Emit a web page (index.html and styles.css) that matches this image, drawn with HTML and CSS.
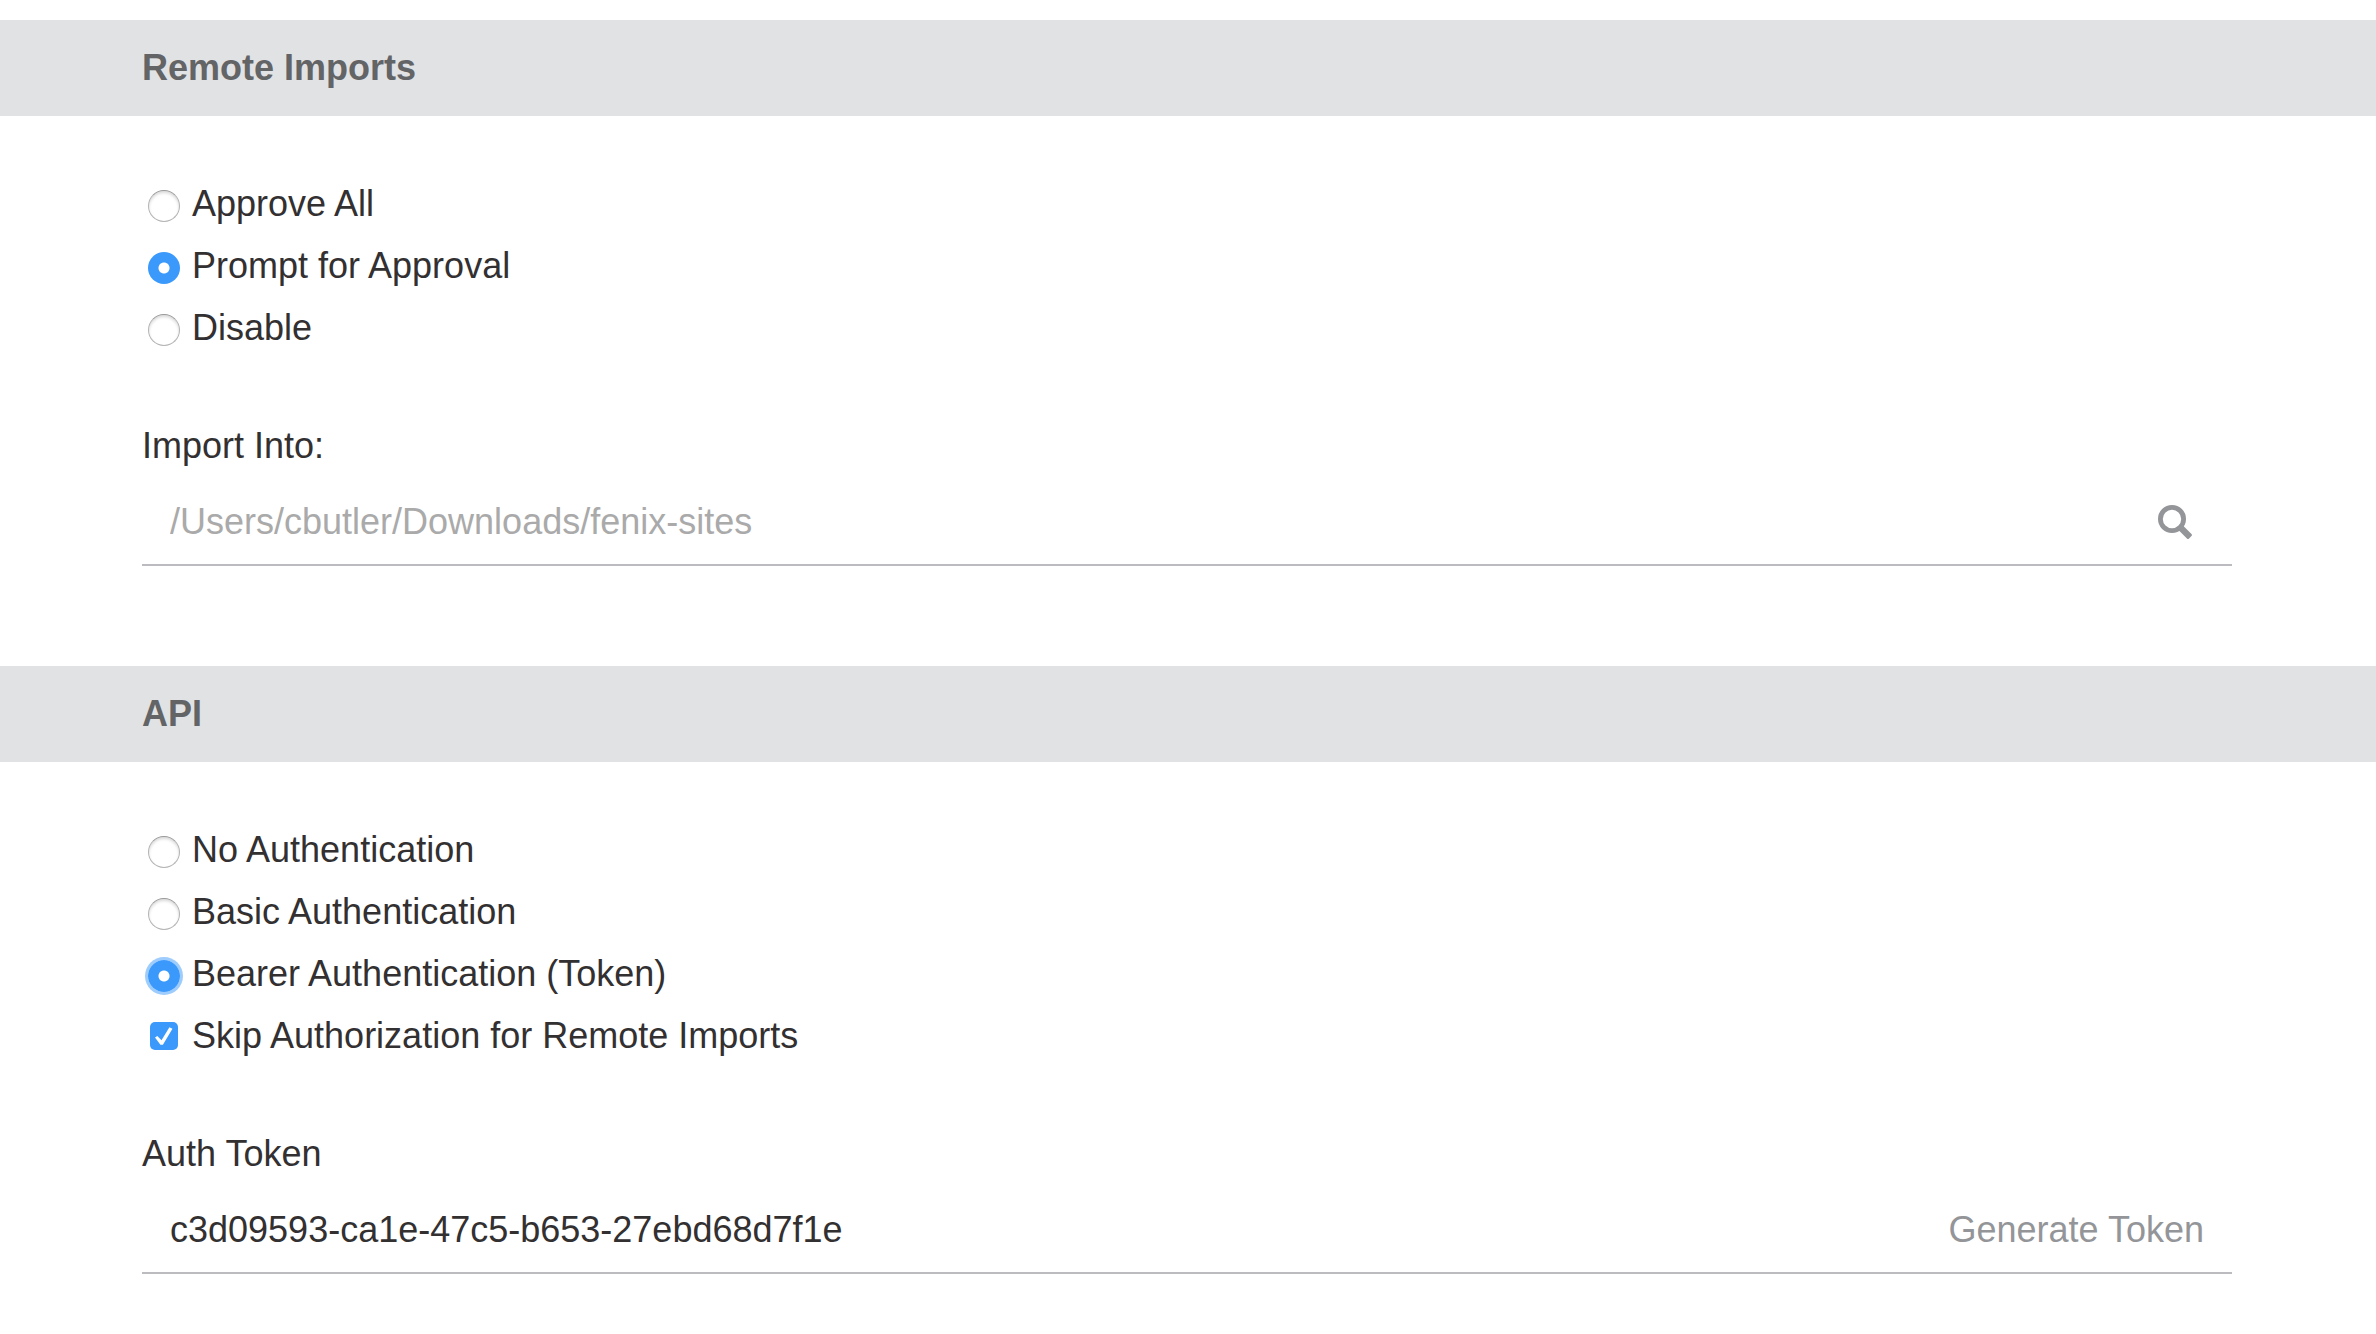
FILE: index.html
```
<!DOCTYPE html>
<html lang="en">
<head>
    <meta charset="utf-8">
    <title>Preferences</title>
    <link rel="stylesheet" href="styles.css">
</head>
<body>
    <form class="preferences">
        <section>
            <h2 class="section-title">Remote Imports</h2>
            <div class="section-body">
                <div class="options">
                    <label class="option"><input type="radio" name="imports" value="approve">Approve All</label>
                    <label class="option"><input type="radio" name="imports" value="prompt" checked>Prompt for Approval</label>
                    <label class="option"><input type="radio" name="imports" value="disable">Disable</label>
                </div>
                <label class="field-label" for="import-path">Import Into:</label>
                <div class="field">
                    <input type="text" id="import-path" placeholder="/Users/cbutler/Downloads/fenix-sites">
                    <button type="button" class="search-button" aria-label="Browse">
                        <svg width="34" height="34" viewBox="0 0 34 34" fill="none" stroke="currentColor">
                            <circle cx="14" cy="14" r="11.6" stroke-width="4.8"/>
                            <path d="M21 23.4L23.4 21L32.4 30L30 32.4Z" fill="currentColor" stroke-width="3" stroke-linejoin="round"/>
                        </svg>
                    </button>
                </div>
            </div>
        </section>
        <section>
            <h2 class="section-title">API</h2>
            <div class="section-body">
                <div class="options">
                    <label class="option"><input type="radio" name="auth" value="none">No Authentication</label>
                    <label class="option"><input type="radio" name="auth" value="basic">Basic Authentication</label>
                    <label class="option"><input type="radio" name="auth" value="bearer" checked autofocus>Bearer Authentication (Token)</label>
                    <label class="option"><input type="checkbox" name="skip" checked>Skip Authorization for Remote Imports</label>
                </div>
                <label class="field-label" for="auth-token">Auth Token</label>
                <div class="field">
                    <input type="text" id="auth-token" value="c3d09593-ca1e-47c5-b653-27ebd68d7f1e">
                    <button type="button" class="token-button">Generate Token</button>
                </div>
            </div>
        </section>
    </form>
</body>
</html>
```
FILE: styles.css
```
* {
    box-sizing: border-box;
}
body {
    margin: 0;
    background-color: #fff;
    color: #333031;
    font-family: "Helvetica Neue Light", "Liberation Sans", Arial, sans-serif;
    font-size: 36px;
    line-height: 62px;
}
.preferences {
    padding-top: 20px;
}
.section-title {
    margin: 0;
    padding: 17px 142px;
    background-color: #e1e2e4;
    color: #636466;
    font-size: 36px;
    font-weight: bold;
}
.section-body {
    padding: 57px 144px 100px 142px;
}
section:last-child .section-body {
    padding-bottom: 56px;
}
.options {
    margin-bottom: 56px;
}
.option {
    display: flex;
    align-items: center;
}
.option input {
    appearance: none;
    flex: none;
    outline: none;
}
.option input[type="radio"] {
    width: 32px;
    height: 32px;
    margin: 4px 12px 0 6px;
    border: 1px solid #b4b4b4;
    border-top-color: #999;
    border-radius: 50%;
    background-color: #fff;
    box-shadow: inset 0 2px 3px rgba(0, 0, 0, 0.15);
}
.option input[type="radio"]:checked {
    border: none;
    background: radial-gradient(circle, #fff 5px, #3b99fc 6px);
    box-shadow: none;
}
.option input[type="radio"]:checked:focus {
    box-shadow: 0 0 0 3px #9dccfd;
}
.option input[type="checkbox"] {
    display: grid;
    place-items: center;
    width: 28px;
    height: 28px;
    margin: 0 14px 0 8px;
    border-radius: 5px;
    background-color: #3b99fc;
}
/* check mark */
.option input[type="checkbox"]:checked::before {
    content: "";
    width: 18px;
    height: 18px;
    background-color: #fff;
    clip-path: polygon(0 58%, 13% 50%, 36% 74%, 80% 2%, 97% 10%, 44% 98%, 30% 98%);
}
.field-label {
    display: block;
}
.field {
    display: flex;
    align-items: center;
    height: 86px;
    margin-top: 3px;
    border-bottom: 2px solid #bbbbc0;
}
.field input {
    flex: 1;
    min-width: 0;
    height: 62px;
    padding: 0 28px;
    border: none;
    outline: none;
    background: none;
    color: inherit;
    font: inherit;
}
.field input::placeholder {
    color: #aaa;
    opacity: 1;
}
.field button {
    border: none;
    background: none;
    color: #939598;
    font: inherit;
    cursor: pointer;
}
.search-button {
    display: flex;
    padding: 0 40px;
}
.token-button {
    padding: 0 28px;
}
```
